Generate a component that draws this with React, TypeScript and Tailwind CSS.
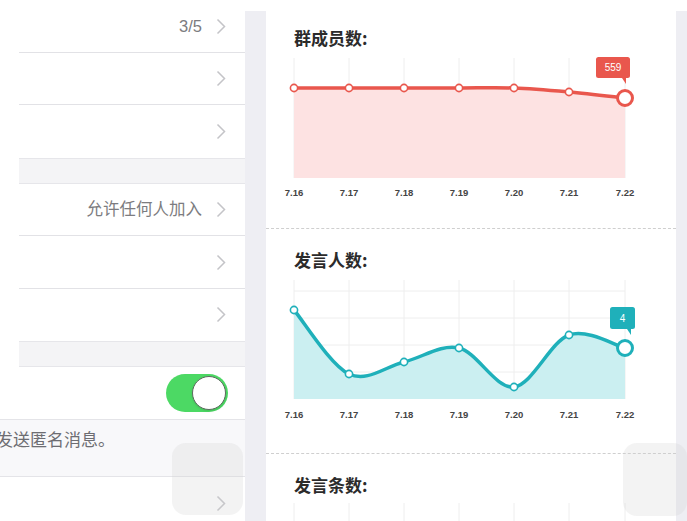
import React from "react";

const XS = [28, 83, 138, 193, 248, 303, 359];
const LABELS = ["7.16", "7.17", "7.18", "7.19", "7.20", "7.21", "7.22"];

const Chevron = () => (
  <svg width="10" height="17" viewBox="0 0 10 17" className="shrink-0">
    <path d="M1.5 1.5 L8.5 8.5 L1.5 15.5" fill="none" stroke="#c4c4c8" strokeWidth="1.5" />
  </svg>
);

const Row = ({ value, last }: { value?: string; last?: boolean }) => (
  <div className="relative h-[52.5px] shrink-0 flex items-center justify-end pr-[19px] gap-[14px]">
    {value && (
      <span className="text-[16.5px] text-[#7c7c80] font-['Liberation_Sans','Noto_Sans_CJK_SC',sans-serif]">
        {value}
      </span>
    )}
    <Chevron />
    {!last && <div className="absolute left-[19px] right-0 bottom-0 h-px bg-[#e2e2e6]" />}
  </div>
);

const Section = () => <div className="h-[26px] shrink-0 ml-[19px] bg-[#f4f4f6] border-y border-[#e6e6ea]" />;

// catmull-rom -> bezier
function smooth(pts: [number, number][]) {
  let d = `M${pts[0][0]} ${pts[0][1]}`;
  for (let i = 0; i < pts.length - 1; i++) {
    const p0 = pts[i - 1] || pts[i];
    const p1 = pts[i];
    const p2 = pts[i + 1];
    const p3 = pts[i + 2] || p2;
    const c1x = p1[0] + (p2[0] - p0[0]) / 6;
    const c1y = p1[1] + (p2[1] - p0[1]) / 6;
    const c2x = p2[0] - (p3[0] - p1[0]) / 6;
    const c2y = p2[1] - (p3[1] - p1[1]) / 6;
    d += ` C${c1x} ${c1y} ${c2x} ${c2y} ${p2[0]} ${p2[1]}`;
  }
  return d;
}

const Chart = ({
  ys,
  top,
  bottom,
  hlines,
  labelY,
  color,
  fill,
  tip,
  tipBox,
  height,
}: {
  ys: number[];
  top: number;
  bottom: number;
  hlines: number[];
  labelY: number;
  color: string;
  fill: string;
  tip: string;
  tipBox: [number, number, number, number];
  height: number;
}) => {
  const pts = XS.map((x, i) => [x, ys[i]] as [number, number]);
  const line = smooth(pts);
  const area = `${line} L${XS[6]} ${bottom} L${XS[0]} ${bottom} Z`;
  const [bx, by, bw, bh] = tipBox;
  const last = pts[6];
  return (
    <svg width="410" height={height} className="block">
      {XS.map((x) => (
        <line key={x} x1={x} x2={x} y1={top} y2={bottom} stroke="#eeeeee" strokeWidth="1" />
      ))}
      {hlines.map((y) => (
        <line key={y} x1={XS[0]} x2={XS[6]} y1={y} y2={y} stroke="#eeeeee" strokeWidth="1" />
      ))}
      <path d={area} fill={fill} />
      <path d={line} fill="none" stroke={color} strokeWidth="3.5" strokeLinecap="round" />
      {pts.slice(0, 6).map(([x, y]) => (
        <circle key={x} cx={x} cy={y} r="3.6" fill="#fff" stroke={color} strokeWidth="1.6" />
      ))}
      <circle cx={last[0]} cy={last[1]} r="7.5" fill="#fff" stroke={color} strokeWidth="3" />
      <rect x={bx} y={by} width={bw} height={bh} rx="2.5" fill={color} />
      <path d={`M${bx + bw - 8} ${by + bh} L${bx + bw - 4} ${by + bh + 6} L${bx + bw - 4} ${by + bh} Z`} fill={color} />
      <text
        x={bx + bw / 2}
        y={by + bh / 2 + 3.5}
        textAnchor="middle"
        fontSize="10"
        fill="#fff"
        fontFamily="Liberation Sans, sans-serif"
      >
        {tip}
      </text>
      {XS.map((x, i) => (
        <text
          key={x}
          x={x}
          y={labelY}
          textAnchor="middle"
          fontSize="9.5"
          fontWeight="bold"
          fill="#444"
          fontFamily="Liberation Sans, sans-serif"
        >
          {LABELS[i]}
        </text>
      ))}
    </svg>
  );
};

const Title = ({ children }: { children: React.ReactNode }) => (
  <div className="pl-[28px] text-[17px] leading-[20px] font-bold text-[#2b2b2b] font-['Noto_Sans_CJK_SC',sans-serif]">
    {children}
  </div>
);

export default function App() {
  return (
    <div className="relative w-[687px] h-[521px] overflow-hidden bg-white flex font-['Noto_Sans_CJK_SC',sans-serif]">
      {/* settings list */}
      <div className="w-[245px] shrink-0 flex flex-col">
        <Row value="3/5" />
        <Row />
        <Row last />
        <Section />
        <Row value="允许任何人加入" />
        <Row />
        <Row last />
        <Section />
        <div className="relative h-[52px] shrink-0 flex items-center justify-end pr-[17px]">
          <div className="w-[62px] h-[38px] rounded-full bg-[#4cd964] flex items-center justify-end pr-[2px]">
            <div className="w-[34px] h-[34px] rounded-full bg-white border border-[#5c6b5e] shadow" />
          </div>
        </div>
        <div className="h-[58px] shrink-0 bg-[#f8f8fa] border-y border-[#e4e4e8] pt-[8px] text-[17px] leading-[22px] text-[#6d6d72] whitespace-nowrap overflow-hidden">
          <span className="block -ml-[4px]">发送匿名消息。</span>
        </div>
        <Row last />
      </div>

      <div className="w-[21px] shrink-0 mt-[11px] bg-[#eeeef3]" />

      {/* charts */}
      <div className="w-[410px] shrink-0 flex flex-col">
        <div className="h-[229px] shrink-0 pt-[28px] border-b border-dashed border-[#cfcfcf]">
          <Title>群成员数:</Title>
          <Chart
            height={160}
            ys={[40, 40, 40, 40, 40, 44, 50]}
            top={10}
            bottom={130}
            hlines={[49, 76, 103]}
            labelY={148}
            color="#e9574d"
            fill="#fde2e2"
            tip="559"
            tipBox={[330, 9, 34, 21]}
          />
        </div>
        <div className="h-[225px] shrink-0 pt-[21px] border-b border-dashed border-[#cfcfcf]">
          <Title>发言人数:</Title>
          <Chart
            height={160}
            ys={[40, 104, 92, 78, 117, 65, 78]}
            top={10}
            bottom={129}
            hlines={[21, 48, 75, 102]}
            labelY={148}
            color="#1fb0ba"
            fill="#cbeff1"
            tip="4"
            tipBox={[344, 37, 25, 22]}
          />
        </div>
        <div className="flex-1 pt-[21px]">
          <Title>发言条数:</Title>
          <svg width="410" height="40" className="block">
            {XS.map((x) => (
              <line key={x} x1={x} x2={x} y1={8} y2={40} stroke="#eeeeee" strokeWidth="1" />
            ))}
          </svg>
        </div>
      </div>

      <div className="flex-1 mt-[11px] bg-[#eeeef3]" />

      {/* floating touch buttons */}
      <div className="absolute left-[172px] top-[443px] w-[71px] h-[72px] rounded-[14px] bg-[#d0d0d0]/25" />
      <div className="absolute left-[623px] top-[443px] w-[64px] h-[73px] rounded-[14px] bg-[#d0d0d0]/25" />
    </div>
  );
}
